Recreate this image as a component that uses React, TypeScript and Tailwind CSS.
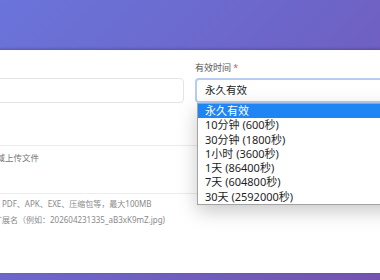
import React from "react";

const options = [
  "永久有效",
  "10分钟 (600秒)",
  "30分钟 (1800秒)",
  "1小时 (3600秒)",
  "1天 (86400秒)",
  "7天 (604800秒)",
  "30天 (2592000秒)",
];

const App = () => {
  return (
    <div className="relative w-[380px] h-[280px] overflow-hidden bg-[linear-gradient(135deg,#6a74da_0%,#6e63c6_55%,#7453b0_100%)] pt-[50px] font-['Noto_Sans','Noto_Sans_CJK_SC',sans-serif]">
      {/* card */}
      <div className="relative -ml-[110px] w-[640px] h-[223px] bg-white rounded-[10px] shadow-[0_-1px_3px_rgba(40,30,90,0.35)] pl-[24px] pr-[24px] pt-[12px]">
        <div className="grid grid-cols-[270px_1fr] gap-x-[11px]">
          <div>
            {/* label of this field sits outside the view */}
            <div className="h-[12px] mb-[4px]" />
            <div className="h-[25px] rounded-[4px] border border-[#e4e4e4] bg-white" />
          </div>
          <div className="relative">
            <div className="text-[9px] leading-[12px] text-[#555] mb-[4px]">
              有效时间 <span className="text-[#e25555]">*</span>
            </div>
            <div className="h-[25px] rounded-[4px] border-2 border-[#b6cdf0] bg-white flex items-center pl-[8px] text-[10.5px] text-[#222]">
              永久有效
            </div>
            {/* open native-like dropdown */}
            <div className="absolute left-[2px] top-[41px] w-[300px] z-10 bg-white border border-[#a3a3a3] shadow-[0_6px_18px_rgba(0,0,0,0.22)]">
              {options.map((o, i) => (
                <div
                  key={o}
                  className={`h-[14.3px] leading-[14.3px] pl-[7px] text-[11px] ${
                    i === 0 ? "bg-[#1f84f4] text-white" : "text-[#1e1e1e]"
                  }`}
                >
                  {o}
                </div>
              ))}
            </div>
          </div>
        </div>

        <div className="mt-[22px] h-[12px] mb-[8px]" />
        <div className="h-[49px] rounded-[6px] border border-[#ebebeb] pl-[22px] pt-[6px]">
          <div className="text-[8.5px] leading-[12px] text-[#777]">
            拖拽文件到此区域上传文件
          </div>
        </div>
        <div className="mt-[2px] text-[8px] leading-[16px] text-[#8a8a8a]">
          <div>支持图片、视频、文档、PDF、APK、EXE、压缩包等，最大100MB</div>
          <div>文件将重命名并保留原扩展名（例如：202604231335_aB3xK9mZ.jpg)</div>
        </div>
      </div>
    </div>
  );
};

export default App;
